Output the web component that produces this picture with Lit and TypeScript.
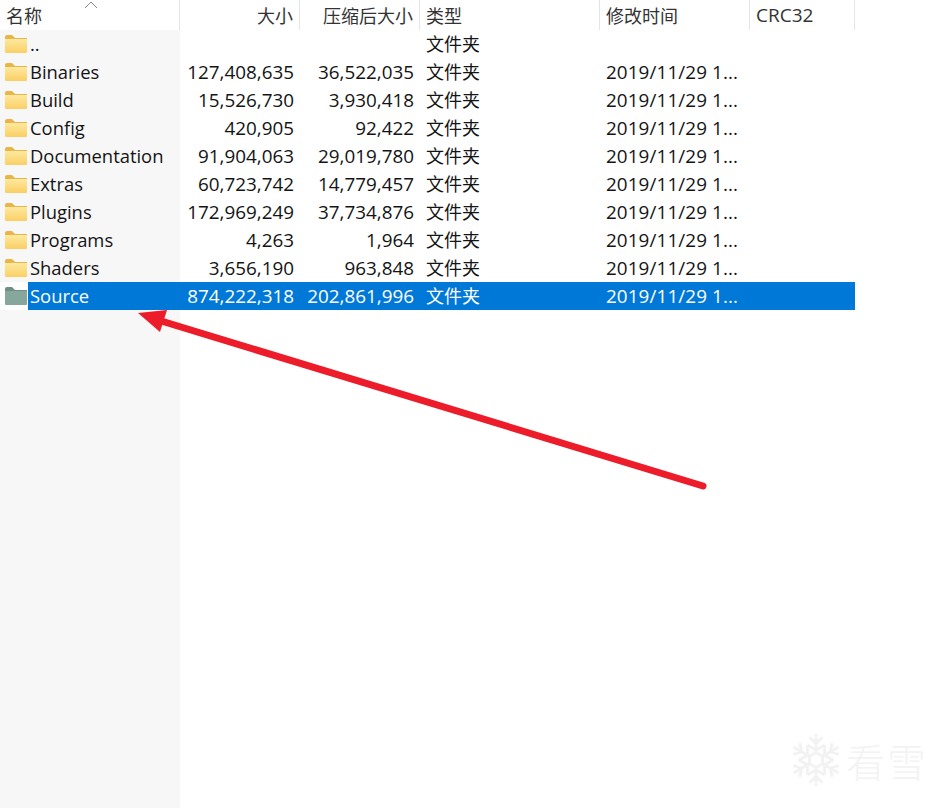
import { LitElement, html, css, svg } from "lit";
import { customElement } from "lit/decorators.js";

interface Row { name: string; size: string; packed: string; selected?: boolean; }

const ROWS: Row[] = [
  { name: "..", size: "", packed: "" },
  { name: "Binaries", size: "127,408,635", packed: "36,522,035" },
  { name: "Build", size: "15,526,730", packed: "3,930,418" },
  { name: "Config", size: "420,905", packed: "92,422" },
  { name: "Documentation", size: "91,904,063", packed: "29,019,780" },
  { name: "Extras", size: "60,723,742", packed: "14,779,457" },
  { name: "Plugins", size: "172,969,249", packed: "37,734,876" },
  { name: "Programs", size: "4,263", packed: "1,964" },
  { name: "Shaders", size: "3,656,190", packed: "963,848" },
  { name: "Source", size: "874,222,318", packed: "202,861,996", selected: true },
];

const folder = (selected: boolean) => html`
  <svg class="folder" width="22" height="18" viewBox="0 0 22 18">
    <defs>
      <linearGradient id="f" x1="0" y1="0" x2="0" y2="1">
        <stop offset="0" stop-color="#fde9a0" />
        <stop offset="1" stop-color="#fbcf63" />
      </linearGradient>
    </defs>
    <path d="M0 2 Q0 0 2 0 H7 L10 3 H22 V6 H0 Z" fill=${selected ? "#6f8f86" : "#e9b548"} />
    <path d="M0 4 H22 V17 Q22 18 21 18 H1 Q0 18 0 17 Z" fill=${selected ? "#86a79c" : "url(#f)"} />
  </svg>`;

const flakeArm = (deg: number) => svg`
  <g transform="rotate(${deg} 25 25)">
    <path d="M25 18 V1 M25 10 L19 4 M25 10 L31 4 M25 16 L17 11 M25 16 L33 11" />
  </g>`;

@customElement("app-root")
export class AppRoot extends LitElement {
  static styles = css`
    :host {
      display: block;
      position: relative;
      width: 945px;
      height: 808px;
      overflow: hidden;
      background: #fff;
      font-family: "Open Sans", "Noto Sans CJK SC", sans-serif;
      font-size: 18.4px;
      color: #141414;
    }
    .head, .row {
      display: grid;
      grid-template-columns: 180px 120px 120px 180px 150px 105px;
      width: 855px;
    }
    .head { height: 30px; }
    .hc {
      position: relative;
      display: flex;
      align-items: center;
      padding: 0 6px 0 6px;
      box-sizing: border-box;
      border-right: 1px solid #e5e5e5;
      font-family: "Noto Sans CJK SC", sans-serif;
      font-size: 18px;
      color: #333;
      white-space: nowrap;
    }
    .hc.r { justify-content: flex-end; }
    .hc.latin { font-family: "Open Sans", sans-serif; font-size: 19px; }
    .sort {
      position: absolute;
      left: 84px;
      top: 1px;
    }
    .list {
      height: 778px;
      background: linear-gradient(to right, #f7f7f7 180px, #fff 180px);
    }
    .row { height: 28px; line-height: 28px; white-space: nowrap; }
    .name { display: flex; align-items: center; }
    .iconbox {
      width: 28px;
      height: 28px;
      flex: none;
      display: flex;
      align-items: center;
      justify-content: flex-start;
      padding-left: 5px;
      box-sizing: border-box;
    }
    .iconbox.sel { background: #fff; }
    .folder { display: block; margin-top: -1px; }
    .label { flex: 1; height: 28px; padding-left: 2px; }
    .num { text-align: right; padding-right: 6px; font-size: 18.85px; }
    .txt { padding-left: 6px; }
    .date { font-size: 18.85px; letter-spacing: 0.1px; }
    .cjk { font-family: "Noto Sans CJK SC", sans-serif; font-size: 18px; line-height: 26px; }
    .sel-cell { background: #0078d7; color: #fff; }
    .arrow { position: absolute; left: 0; top: 0; pointer-events: none; }
    .mark {
      position: absolute;
      left: 789px;
      top: 733px;
      display: flex;
      align-items: center;
      gap: 3px;
    }
    .mark svg path { fill: none; stroke: #f2f2f2; stroke-width: 2.6; }
    .mark span {
      font-family: "Noto Sans CJK SC", sans-serif;
      font-weight: 300;
      font-size: 39px;
      line-height: 54px;
      letter-spacing: 2px;
      color: #f3f3f3;
    }
  `;

  render() {
    return html`
      <div class="head">
        <div class="hc">名称
          <svg class="sort" width="14" height="8" viewBox="0 0 14 8">
            <path d="M1 7 L7 1 L13 7" fill="none" stroke="#8a8a8a" stroke-width="1" />
          </svg>
        </div>
        <div class="hc r">大小</div>
        <div class="hc r">压缩后大小</div>
        <div class="hc">类型</div>
        <div class="hc">修改时间</div>
        <div class="hc latin">CRC32</div>
      </div>
      <div class="list">
        ${ROWS.map((r) => {
          const s = r.selected ? "sel-cell" : "";
          return html`
            <div class="row">
              <div class="name">
                <div class="iconbox ${r.selected ? "sel" : ""}">${folder(!!r.selected)}</div>
                <div class="label ${s}">${r.name}</div>
              </div>
              <div class="num ${s}">${r.size}</div>
              <div class="num ${s}">${r.packed}</div>
              <div class="txt cjk ${s}">文件夹</div>
              <div class="txt date ${s}">${r.name === ".." ? "" : "2019/11/29 1..."}</div>
              <div class="${s}"></div>
            </div>`;
        })}
      </div>
      <svg class="arrow" width="945" height="808" viewBox="0 0 945 808">
        <line x1="703" y1="486" x2="158" y2="320" stroke="#ed1c2a" stroke-width="7" stroke-linecap="round" />
        <path d="M138 313 L167 310 L160 332 Z" fill="#ed1c2a" />
      </svg>
      <div class="mark">
        <svg width="54" height="54" viewBox="0 0 50 50">
          ${[0, 60, 120, 180, 240, 300].map(flakeArm)}
          <path d="M25 18 L31 21.5 V28.5 L25 32 L19 28.5 V21.5 Z" />
        </svg>
        <span>看雪</span>
      </div>
    `;
  }
}
